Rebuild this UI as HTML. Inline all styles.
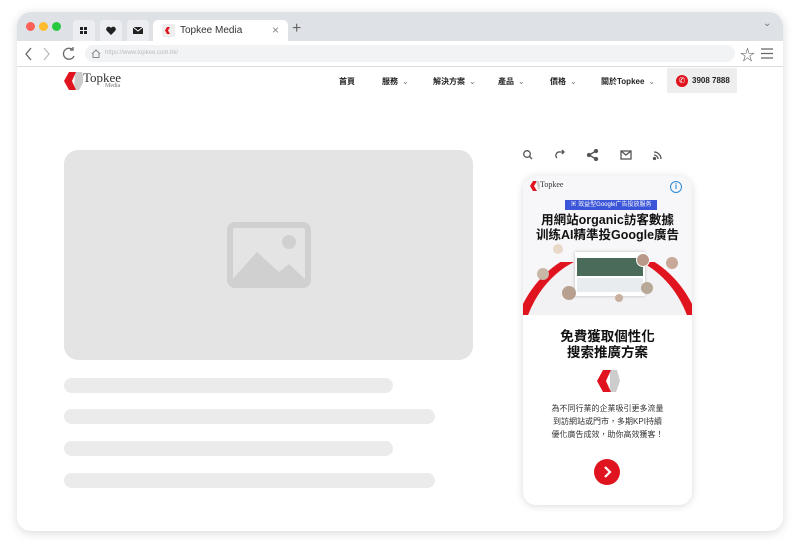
<!DOCTYPE html>
<html><head><meta charset="utf-8"><style>
*{margin:0;padding:0;box-sizing:border-box}
body{width:800px;height:544px;background:#fff;font-family:"Liberation Sans","Noto Sans CJK TC",sans-serif;position:relative;overflow:hidden}
.win{position:absolute;left:17px;top:12px;width:766px;height:519px;border-radius:14px;background:#fff;box-shadow:0 2px 10px rgba(0,0,0,.15);overflow:hidden}
.tabs{position:absolute;left:0;top:0;width:766px;height:29px;background:#dee1e6}
.dot{position:absolute;top:10px;width:9px;height:9px;border-radius:50%}
.mt{position:absolute;top:8px;width:22px;height:21px;background:#eceef1;border-radius:4px 4px 0 0}
.tab{position:absolute;left:136px;top:8px;width:135px;height:21px;background:#fff;border-radius:5px 5px 0 0;font-size:10px;color:#333}
.tool{position:absolute;top:29px;left:0;width:766px;height:26px;background:#fff;border-bottom:1px solid #ddd}
.addr{position:absolute;left:68px;top:4px;width:650px;height:17px;background:#f1f3f4;border-radius:9px;font-size:6px;color:#bbb;padding:5px 0 0 20px}
.nav{position:absolute;top:76px;font-size:8px;font-weight:bold;color:#222}
.nav i{font-style:normal;font-weight:normal;color:#777;margin-left:4px}
.line{position:absolute;left:64px;height:15px;background:#ebebeb;border-radius:8px}
</style></head><body>
<div class="win">
<div class="tabs">
<div class="dot" style="left:9px;background:#fe5f57"></div>
<div class="dot" style="left:22px;background:#febc2e"></div>
<div class="dot" style="left:35px;background:#28c840"></div>
<div class="mt" style="left:56px"><svg width="22" height="21"><g fill="#222"><rect x="7" y="7" width="3" height="3"/><rect x="11" y="7" width="3" height="3"/><rect x="7" y="11" width="3" height="3"/><rect x="11" y="11" width="3" height="3"/></g></svg></div>
<div class="mt" style="left:83px"><svg width="22" height="21"><path d="M11 15L6.5 10.5A2.3 2.3 0 0 1 11 8A2.3 2.3 0 0 1 15.5 10.5Z" fill="#222"/></svg></div>
<div class="mt" style="left:110px"><svg width="22" height="21"><rect x="6" y="7" width="10" height="7" fill="#222"/><path d="M6 7L11 11L16 7" stroke="#fff" fill="none"/></svg></div>
<div class="tab"><svg style="position:absolute;left:9px;top:4px" width="13" height="13"><rect width="13" height="13" rx="2" fill="#eee"/><path d="M5 3L3 6.5L5 10L8 10L6 6.5L8 3Z" fill="#e0141e"/></svg><span style="position:absolute;left:27px;top:5px">Topkee Media</span><span style="position:absolute;left:119px;top:3px;color:#888;font-size:12px">×</span></div>
<span style="position:absolute;left:275px;top:8px;font-size:16px;color:#666">+</span>
<span style="position:absolute;left:746px;top:6px;font-size:10px;color:#777">⌄</span>
</div>
<div class="tool">
<svg style="position:absolute;left:6px;top:5px" width="60" height="16" fill="none" stroke="#666" stroke-width="1.3"><path d="M8 2L3 8L8 14"/><path d="M21 2L26 8L21 14" stroke="#bbb"/><path d="M50 4A5.5 5.5 0 1 0 51 10M50 1V4H47"/></svg>
<div class="addr"><svg style="position:absolute;left:6px;top:4px" width="10" height="9" fill="none" stroke="#888"><path d="M1 5L5 1L9 5M2 4V8.5H8V4"/></svg>https://www.topkee.com.hk/</div>
<span style="position:absolute;left:723px;top:3px;font-size:15px;color:#555">☆</span>
<svg style="position:absolute;left:744px;top:7px" width="12" height="11" stroke="#666" stroke-width="1.3"><path d="M0 1H12M0 5.5H12M0 10H12"/></svg>
</div>
</div>
<svg style="position:absolute;left:63px;top:71px" width="20" height="20"><path d="M12 1L19 1L21 10L16 19L11 19Z" fill="#ccc"/><path d="M6 1L13 1L9 10L13 19L6 19L1 10Z" fill="#e0141e"/></svg>
<span style="position:absolute;left:83px;top:70px;font-family:'Liberation Serif',serif;font-size:13px;color:#333">Topkee</span>
<span style="position:absolute;left:105px;top:83px;font-family:'Liberation Serif',serif;font-size:6px;color:#777">Media</span>
<span class="nav" style="left:339px">首頁</span>
<span class="nav" style="left:382px">服務<i>⌄</i></span>
<span class="nav" style="left:433px">解決方案<i>⌄</i></span>
<span class="nav" style="left:498px">產品<i>⌄</i></span>
<span class="nav" style="left:550px">價格<i>⌄</i></span>
<span class="nav" style="left:601px">關於Topkee<i>⌄</i></span>
<div style="position:absolute;left:667px;top:68px;width:70px;height:25px;background:#eee"></div>
<div style="position:absolute;left:676px;top:75px;width:12px;height:12px;border-radius:50%;background:#e0141e;color:#fff;font-size:8px;text-align:center;line-height:12px">✆</div>
<span class="nav" style="left:692px;top:76px">3908 7888</span>
<div style="position:absolute;left:64px;top:150px;width:409px;height:210px;background:#e4e4e4;border-radius:14px"></div>
<svg style="position:absolute;left:227px;top:222px" width="84" height="66"><rect x="3" y="3" width="78" height="60" rx="5" fill="none" stroke="#d0d0d0" stroke-width="6"/><circle cx="62" cy="20" r="7" fill="#d0d0d0"/><path d="M3 60L30 30L52 50L62 42L81 60Z" fill="#d0d0d0"/></svg>
<div class="line" style="top:378px;width:329px"></div>
<div class="line" style="top:409px;width:371px"></div>
<div class="line" style="top:441px;width:329px"></div>
<div class="line" style="top:473px;width:371px"></div>
<svg style="position:absolute;left:522px;top:149px" width="145" height="12" fill="none" stroke="#555" stroke-width="1.3">
<circle cx="5" cy="5" r="3.3"/><path d="M7.5 7.5L10 10"/>
<path d="M35 9A3.5 3.5 0 0 1 38 3H42M40 1L42 3L40 5"/>
<circle cx="67" cy="6" r="1.5" fill="#555"/><circle cx="74" cy="2" r="1.5" fill="#555"/><circle cx="74" cy="10" r="1.5" fill="#555"/><path d="M67 6L74 2M67 6L74 10"/>
<rect x="99" y="2" width="10" height="8"/><path d="M99 2L104 6L109 2"/>
<path d="M132 3A7 7 0 0 1 139 10M132 6A4 4 0 0 1 136 10"/><circle cx="132.5" cy="9.5" r="1" fill="#555"/>
</svg>
<div style="position:absolute;left:523px;top:176px;width:169px;height:329px;border-radius:13px;background:#fff;box-shadow:0 1px 8px rgba(0,0,0,.15);overflow:hidden">
<div style="position:absolute;left:0;top:0;width:169px;height:139px;background:#f7f7f9;overflow:hidden">
<div style="position:absolute;left:-14px;top:72px;width:197px;height:230px;border-radius:50%;border:10px solid #e0141e"></div>
<div style="position:absolute;left:-3px;top:78px;width:175px;height:210px;border-radius:50%;background:#f2f2f5"></div>
<div style="position:absolute;left:0;top:0;width:169px;height:86px;background:#f7f7f9"></div>
<svg style="position:absolute;left:6px;top:4px" width="12" height="12"><path d="M4 1L1 6L4 11L8 11L5 6L8 1Z" fill="#e0141e"/><path d="M7 1L10 1L11 6L10 11Z" fill="#ccc"/></svg>
<span style="position:absolute;left:17px;top:4px;font-family:'Liberation Serif',serif;font-size:8px;color:#333">Topkee</span>
<div style="position:absolute;left:147px;top:5px;width:12px;height:12px;border-radius:50%;border:1.3px solid #2a8ad8;color:#2a8ad8;font-size:8px;font-weight:bold;text-align:center;line-height:10px">i</div>
<div style="position:absolute;left:42px;top:24px;width:92px;height:10px;background:#3a55d8;color:#fff;font-size:6px;text-align:center;line-height:10px">▣ 效益型Google广告投放服务</div>
<div style="position:absolute;left:0;top:37px;width:169px;text-align:center;font-size:12.5px;font-weight:bold;color:#111;line-height:15px">用網站organic訪客數據<br>训练AI精準投Google廣告</div>
<div style="position:absolute;left:52px;top:76px;width:70px;height:44px;background:#fff;box-shadow:0 0 3px rgba(0,0,0,.25)"><div style="margin:6px 2px 2px;height:18px;background:#4a6a5a"></div><div style="margin:0 2px;height:14px;background:#e8ecef"></div></div>
<div style="position:absolute;left:30px;top:68px;width:10px;height:10px;border-radius:50%;background:#e8d8c8"></div>
<div style="position:absolute;left:14px;top:92px;width:12px;height:12px;border-radius:50%;background:#c8b8a8"></div>
<div style="position:absolute;left:113px;top:77px;width:14px;height:14px;border-radius:50%;background:#b89888;border:1px solid #fff"></div>
<div style="position:absolute;left:143px;top:81px;width:12px;height:12px;border-radius:50%;background:#c8a898"></div>
<div style="position:absolute;left:39px;top:110px;width:14px;height:14px;border-radius:50%;background:#b8a090"></div>
<div style="position:absolute;left:118px;top:106px;width:12px;height:12px;border-radius:50%;background:#b8a898"></div>
<div style="position:absolute;left:92px;top:118px;width:8px;height:8px;border-radius:50%;background:#c8b0a0"></div>
</div>
<div style="position:absolute;left:0;top:153px;width:169px;text-align:center;font-size:13.5px;font-weight:bold;color:#111;line-height:16px">免費獲取個性化<br>搜索推廣方案</div>
<svg style="position:absolute;left:72px;top:193px" width="26" height="24"><path d="M15 1L22 1L25 12L21 23L15 23Z" fill="#ccc"/><path d="M8 1L16 1L11 12L16 23L8 23L2 12Z" fill="#e0141e"/></svg>
<div style="position:absolute;left:0;top:226px;width:169px;text-align:center;font-size:8px;color:#333;line-height:13px">為不同行業的企業吸引更多流量<br>到訪網站或門市，多期KPI持續<br>優化廣告成效，助你高效獲客！</div>
<div style="position:absolute;left:71px;top:283px;width:26px;height:26px;border-radius:50%;background:#e0141e"><svg width="26" height="26" fill="none" stroke="#fff" stroke-width="2.2"><path d="M11 8L16 13L11 18"/></svg></div>
</div>
</body></html>
